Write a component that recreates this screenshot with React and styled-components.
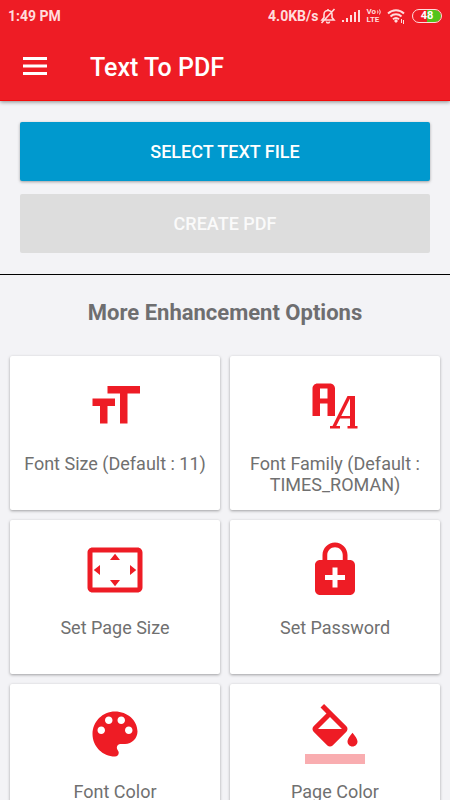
import React from "react";
import styled, { createGlobalStyle } from "styled-components";

const GlobalStyle = createGlobalStyle`
  * { box-sizing: border-box; }
  body { margin: 0; background: #f3f3f6; font-family: Roboto, "Liberation Sans", sans-serif; }
  button { font-family: inherit; border: 0; cursor: pointer; }
  button:disabled { cursor: default; }
`;

const Screen = styled.div`
  height: 100vh;
  display: flex;
  flex-direction: column;
  overflow: hidden;
`;

const Header = styled.header`
  flex: none;
  position: relative;
  background: #ee1c25;
  color: #fff;
  border-bottom: 1px solid #f40a0a;
  box-shadow: 0 1px 4px rgba(0, 0, 0, 0.45);
`;

const StatusBar = styled.div`
  display: flex;
  justify-content: space-between;
  align-items: center;
  height: 32px;
  padding: 0 8px;
  font-size: 14px;
  font-weight: 700;
  color: #ffdcdd;
`;

const StatusItems = styled.div`
  display: flex;
  align-items: center;
`;

const StatusIcon = styled.svg`
  display: block;
  margin-left: ${(p) => p.$gap}px;
`;

const VoLte = styled.span`
  display: flex;
  flex-direction: column;
  margin-left: 6px;
  font-size: 8px;
  line-height: 8px;
  font-weight: 700;
`;

const VoRow = styled.span`
  display: flex;
  align-items: center;
  gap: 1px;
`;

const Battery = styled.span`
  display: flex;
  align-items: center;
  justify-content: center;
  width: 30px;
  height: 14px;
  margin-left: 6px;
  padding: 1px;
  border: 1px solid #ffdcdd;
  border-radius: 7px;
  background: linear-gradient(to right, transparent 50%, #52c41a 50%) padding-box;
  color: #fff;
  font-size: 11px;
  line-height: 10px;
`;

const Toolbar = styled.div`
  display: flex;
  align-items: center;
  height: 68px;
  padding-left: 17px;
`;

const MenuButton = styled.button`
  display: flex;
  padding: 0;
  background: none;
  color: inherit;
`;

const Title = styled.h1`
  margin: 0 0 0 37px;
  padding-top: 4px;
  font-size: 25px;
  line-height: 32px;
  font-weight: 500;
`;

const Content = styled.main`
  flex: 1;
  min-height: 0;
  overflow-y: auto;
  scrollbar-width: none;
`;

const Actions = styled.section`
  display: flex;
  flex-direction: column;
  gap: 13px;
  padding: 21px 20px;
  border-bottom: 1px solid #000;
`;

const ActionButton = styled.button`
  height: 59px;
  border-radius: 2px;
  background: #0099ce;
  color: #fff;
  font-size: 18px;
  font-weight: 500;
  box-shadow: 0 1px 3px rgba(0, 0, 0, 0.35);

  &:disabled {
    background: #ddd;
    color: #fafafa;
    box-shadow: none;
  }
`;

const SectionTitle = styled.h2`
  margin: 0;
  padding: 23px 10px 28px;
  text-align: center;
  color: #6e6e70;
  font-size: 22px;
  line-height: 30px;
  font-weight: 700;
`;

const OptionGrid = styled.div`
  display: grid;
  grid-template-columns: 1fr 1fr;
  grid-auto-rows: 1fr;
  gap: 10px;
  padding: 0 10px 10px;
`;

const OptionCard = styled.button`
  display: flex;
  flex-direction: column;
  align-items: center;
  min-height: 154px;
  padding: 20px 10px 15px;
  border-radius: 2px;
  background: #fff;
  color: #707070;
  box-shadow: 0 1px 3px rgba(0, 0, 0, 0.35);
`;

const OptionIcon = styled.svg`
  flex: none;
  width: 60px;
  height: 60px;
  fill: #ee1c25;
`;

const OptionLabel = styled.span`
  margin-top: 17px;
  font-size: 18px;
  line-height: 21px;
  text-align: center;
`;

const options = [
  {
    label: "Font Size (Default : 11)",
    path: "M9 4v3h5v12h3V7h5V4H9zm-6 8h3v7h3v-7h3V9H3v3z",
  },
  {
    label: "Font Family (Default : TIMES_ROMAN)",
    path: "M17 8h3v12h1v1h-4v-1h1v-3h-4l-1.5 3H14v1h-4v-1h1l6-12m1 1l-3.5 7H18V9M5 3h5c1.11 0 2 .89 2 2v11H9v-5H6v5H3V5c0-1.11.89-2 2-2m1 2v4h3V5H6z",
  },
  {
    label: "Set Page Size",
    path: "M12.01 5.5L10 8h4l-1.99-2.5zM18 10v4l2.5-1.99L18 10zM6 10l-2.5 2.01L6 14v-4zm8 6h-4l2.01 2.5L14 16zm7-13H3c-1.1 0-2 .9-2 2v14c0 1.1.9 2 2 2h18c1.1 0 2-.9 2-2V5c0-1.1-.9-2-2-2zm0 16.01H3V4.99h18v14.02z",
  },
  {
    label: "Set Password",
    path: "M18 8h-1V6c0-2.76-2.24-5-5-5S7 3.24 7 6v2H6c-1.1 0-2 .9-2 2v10c0 1.1.9 2 2 2h12c1.1 0 2-.9 2-2V10c0-1.1-.9-2-2-2zM8.9 6c0-1.71 1.39-3.1 3.1-3.1s3.1 1.39 3.1 3.1v2H8.9V6zM16 16h-3v3h-2v-3H8v-2h3v-3h2v3h3v2z",
  },
  {
    label: "Font Color",
    path: "M12 3c-4.97 0-9 4.03-9 9s4.03 9 9 9c.83 0 1.5-.67 1.5-1.5 0-.39-.15-.74-.39-1.01-.23-.26-.38-.61-.38-.99 0-.83.67-1.5 1.5-1.5H16c2.76 0 5-2.24 5-5 0-4.42-4.03-8-9-8zm-5.5 9c-.83 0-1.5-.67-1.5-1.5S5.67 9 6.5 9 8 9.67 8 10.5 7.33 12 6.5 12zm3-4C8.67 8 8 7.33 8 6.5S8.67 5 9.5 5s1.5.67 1.5 1.5S10.33 8 9.5 8zm5 0c-.83 0-1.5-.67-1.5-1.5S13.67 5 14.5 5s1.5.67 1.5 1.5S15.33 8 14.5 8zm3 4c-.83 0-1.5-.67-1.5-1.5S16.67 9 17.5 9s1.5.67 1.5 1.5-.67 1.5-1.5 1.5z",
  },
  {
    label: "Page Color",
    path: "M16.56 8.94L7.62 0 6.21 1.41l2.38 2.38-5.15 5.15c-.59.59-.59 1.54 0 2.12l5.5 5.5c.29.29.68.44 1.06.44s.77-.15 1.06-.44l5.5-5.5c.59-.58.59-1.53 0-2.12zM5.21 10L10 5.21 14.79 10H5.21zM19 11.5s-2 2.17-2 3.5c0 1.1.9 2 2 2s2-.9 2-2c0-1.33-2-3.5-2-3.5z",
    swatch: true,
  },
];

export default function App() {
  return (
    <Screen>
      <GlobalStyle />
      <Header>
        <StatusBar>
          <span>1:49 PM</span>
          <StatusItems>
            <span>4.0KB/s</span>
            <StatusIcon $gap={2} width="16" height="16" viewBox="0 0 16 16" fill="none" stroke="currentColor" strokeWidth="1.6" aria-hidden="true">
              <path d="M2 12h12l-2-2.500V6.500a4 4 0 0 0-8 0v3zM6.500 13.500a1.500 1.500 0 0 0 3 0M8 2.500V1M14.500 1L1.500 15" />
            </StatusIcon>
            <StatusIcon $gap={6} width="18" height="14" viewBox="0 0 18 14" fill="currentColor" aria-hidden="true">
              <path d="M0 11h2v2H0zM4 9h2v4H4zM8 6h2v7H8zM12 3h2v10h-2zM16 1h2v12h-2z" />
            </StatusIcon>
            <VoLte>
              <VoRow>
                Vo
                <svg width="4" height="6" viewBox="0 0 4 6" fill="none" stroke="currentColor" aria-hidden="true">
                  <path d="M0.500 1.500q1 1.500 0 3M2.500 0.500q1.500 2.500 0 5" />
                </svg>
              </VoRow>
              <span>LTE</span>
            </VoLte>
            <StatusIcon $gap={6} width="19" height="16" viewBox="0 0 19 16" fill="none" stroke="currentColor" strokeWidth="1.9" aria-hidden="true">
              <path d="M1 5.500a11.500 11.500 0 0 1 16 0M3.500 8.500a8 8 0 0 1 11 0M6 11.300a4.500 4.500 0 0 1 6 0" />
              <path d="M9 11l2 2-2 2-2-2z" fill="currentColor" stroke="none" />
              <path d="M14.500 15v-4M16.500 12v4" strokeWidth="1" />
            </StatusIcon>
            <Battery>48</Battery>
          </StatusItems>
        </StatusBar>
        <Toolbar>
          <MenuButton aria-label="Open menu">
            <svg width="36" height="36" viewBox="0 0 24 24" fill="currentColor" aria-hidden="true">
              <path d="M4 18h16v-2H4v2zm0-5h16v-2H4v2zm0-7v2h16V6H4z" />
            </svg>
          </MenuButton>
          <Title>Text To PDF</Title>
        </Toolbar>
      </Header>
      <Content>
        <Actions>
          <ActionButton>SELECT TEXT FILE</ActionButton>
          <ActionButton disabled>CREATE PDF</ActionButton>
        </Actions>
        <SectionTitle>More Enhancement Options</SectionTitle>
        <OptionGrid>
          {options.map((option) => (
            <OptionCard key={option.label}>
              <OptionIcon viewBox="0 0 24 24" aria-hidden="true">
                <path d={option.path} />
                {option.swatch && <path d="M0 20h24v4H0z" opacity=".36" />}
              </OptionIcon>
              <OptionLabel>{option.label}</OptionLabel>
            </OptionCard>
          ))}
        </OptionGrid>
      </Content>
    </Screen>
  );
}
